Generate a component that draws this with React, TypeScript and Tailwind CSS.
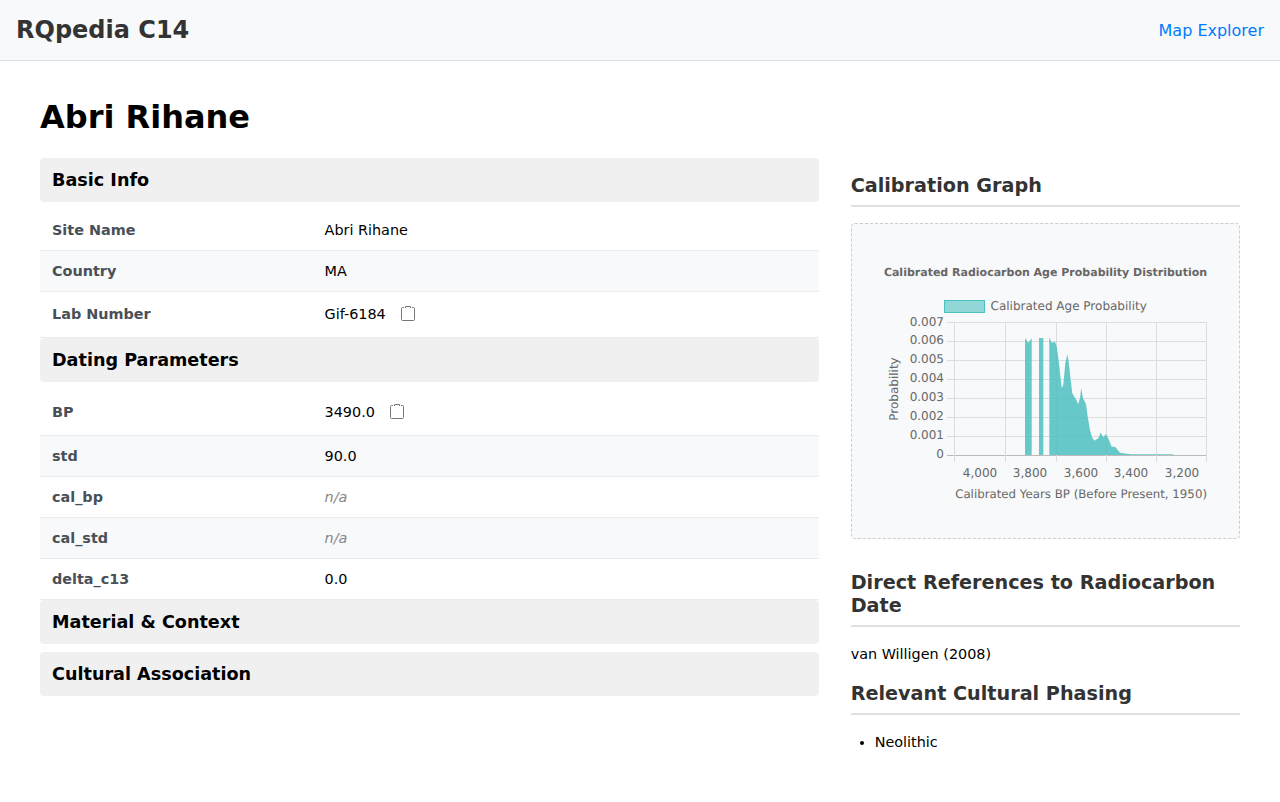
const font = { fontFamily: '"DejaVu Sans", sans-serif' };

function CopyIcon() {
  return (
    <svg width="16" height="16" viewBox="0 0 16 16" fill="none" stroke="#777" strokeWidth="1" className="block">
      <path d="M4 2.5H2.5A1 1 0 0 0 1.5 3.5V14.5A1 1 0 0 0 2.5 15.5H13.5A1 1 0 0 0 14.5 14.5V3.5A1 1 0 0 0 13.5 2.5H12" />
      <path d="M5.5 3V1.5H10.5V3" />
    </svg>
  );
}

function SectionHeader({ title }: { title: string }) {
  return <h3 className="bg-[#f0f0f0] rounded px-3 h-11 flex items-center text-[17.6px] font-bold text-black">{title}</h3>;
}

function Row({ label, value, copy, odd, tall }: { label: string; value?: string; copy?: boolean; odd?: boolean; tall?: boolean }) {
  return (
    <div className={`flex items-center border-b border-[#e9ecef] text-[14.4px] ${tall ? "h-[46px]" : "h-[41px] pt-0.5"} ${odd ? "bg-[#f8f9fa]" : "bg-white"}`}>
      <div className="w-[35%] px-3 font-bold text-[#495057]">{label}</div>
      <div className="flex-1 px-3 flex items-center text-black">
        {value ? <span>{value}</span> : <em className="text-[#888]">n/a</em>}
        {copy && <span className="ml-[14px] mb-[3px]"><CopyIcon /></span>}
      </div>
    </div>
  );
}

function SideHeading({ children }: { children: string }) {
  return <h3 className="text-[19.2px] leading-[23px] font-bold text-[#333] border-b-2 border-[#e0e0e0] pb-2">{children}</h3>;
}

const yTicks = [
  { y: 322, t: "0.007", ty: 326 },
  { y: 341, t: "0.006", ty: 344 },
  { y: 360, t: "0.005", ty: 363 },
  { y: 379, t: "0.004", ty: 382 },
  { y: 398, t: "0.003", ty: 401 },
  { y: 417, t: "0.002", ty: 420 },
  { y: 436, t: "0.001", ty: 439 },
  { y: 455, t: "0", ty: 458 },
];
const xGrid = [954, 1005, 1056, 1106, 1156, 1206];
const xLabels = [
  { x: 980, t: "4,000" },
  { x: 1030, t: "3,800" },
  { x: 1081, t: "3,600" },
  { x: 1131, t: "3,400" },
  { x: 1182, t: "3,200" },
];

const area =
  "M1025 455V338L1028.3 342.7L1031.7 338.3V455Z M1039 455V338H1043.3V455Z " +
  "M1049.3 455V337.3L1051.7 342.7L1055 341.7L1056.7 346.7L1059 363.3L1061.7 388.3L1063.3 385L1065.3 363.3L1067.3 354.3L1068.7 361.7L1070.7 380L1072.3 393.3L1076.7 400.7L1078.3 404L1080 398.3L1081.3 388.3L1083 398.3L1086 404L1087.7 416.7L1090 430L1092 437.3L1094.3 440.7L1098.3 438.3L1100.7 432.7L1103.3 437.3L1106 434L1109 440L1111.7 446.7L1115 446.7L1120 452.7L1126.7 453.7L1131.7 454.3L1173.3 454.3V455Z";

function Chart() {
  // the svg uses page coordinates, shifted by the box origin
  return (
    <svg width="387" height="314" viewBox="852 224 387 314" className="block opacity-[0.99]" textRendering="geometricPrecision">
      <text x="1045.5" y="276" textAnchor="middle" fontSize="11" fontWeight="700" fill="#666">
        Calibrated Radiocarbon Age Probability Distribution
      </text>
      <rect x="944.5" y="300.5" width="40" height="12" fill="rgba(75,192,192,0.6)" stroke="rgb(75,192,192)" />
      <text x="990.5" y="310" fontSize="12" fill="#666">Calibrated Age Probability</text>
      {yTicks.map((t) => (
        <g key={t.y}>
          <line x1="947" x2="1207" y1={t.y + 0.5} y2={t.y + 0.5} stroke={t.y === 455 ? "#bbb" : "#ddd"} />
          <text x="944" y={t.ty} textAnchor="end" fontSize="12" fill="#666">{t.t}</text>
        </g>
      ))}
      {xGrid.map((x) => (
        <line key={x} x1={x + 0.5} x2={x + 0.5} y1="322" y2="462" stroke="#ddd" />
      ))}
      {xLabels.map((l) => (
        <text key={l.x} x={l.x} y="477" textAnchor="middle" fontSize="12" fill="#666">{l.t}</text>
      ))}
      <path d={area} fill="rgba(75,192,192,0.85)" />
      <text x="1207" y="498" textAnchor="end" fontSize="11.8" fill="#666">Calibrated Years BP (Before Present, 1950)</text>
      <text transform="translate(898 389) rotate(-90)" textAnchor="middle" fontSize="12" fill="#666">Probability</text>
    </svg>
  );
}

export default function App() {
  return (
    <div className="min-h-[802px] bg-white text-black" style={font}>
      <nav className="h-[61px] bg-[#f8f9fa] border-b border-[#dee2e6] px-4 flex items-center justify-between">
        <span className="text-[24px] font-bold text-[#333]">RQpedia C14</span>
        <a className="text-[16px] text-[#007bff] pt-0.5">Map Explorer</a>
      </nav>
      <main className="px-10 pt-9">
        <h1 className="text-[32px] leading-[40px] font-bold text-black mb-[21px]">Abri Rihane</h1>
        <div className="flex gap-8 items-start">
          <div className="flex-[2] min-w-0">
            <SectionHeader title="Basic Info" />
            <div className="pt-2">
              <Row label="Site Name" value="Abri Rihane" />
              <Row label="Country" value="MA" odd />
              <Row label="Lab Number" value="Gif-6184" copy tall />
            </div>
            <SectionHeader title="Dating Parameters" />
            <div className="pt-2">
              <Row label="BP" value="3490.0" copy tall />
              <Row label="std" value="90.0" odd />
              <Row label="cal_bp" />
              <Row label="cal_std" odd />
              <Row label="delta_c13" value="0.0" />
            </div>
            <SectionHeader title="Material & Context" />
            <div className="h-2" />
            <SectionHeader title="Cultural Association" />
          </div>
          <div className="flex-1 min-w-0 pt-4">
            <SideHeading>Calibration Graph</SideHeading>
            <div className="mt-4 border border-dashed border-[#ccc] rounded bg-[#f8f9fa]">
              <Chart />
            </div>
            <div className="mt-8">
              <SideHeading>Direct References to Radiocarbon Date</SideHeading>
            </div>
            <p className="mt-[19px] text-[14.4px] leading-[17px]">van Willigen (2008)</p>
            <div className="mt-[19px]">
              <SideHeading>Relevant Cultural Phasing</SideHeading>
            </div>
            <ul className="mt-[19px] pl-6 list-disc text-[14.4px] leading-[17px]">
              <li>Neolithic</li>
            </ul>
          </div>
        </div>
      </main>
    </div>
  );
}
